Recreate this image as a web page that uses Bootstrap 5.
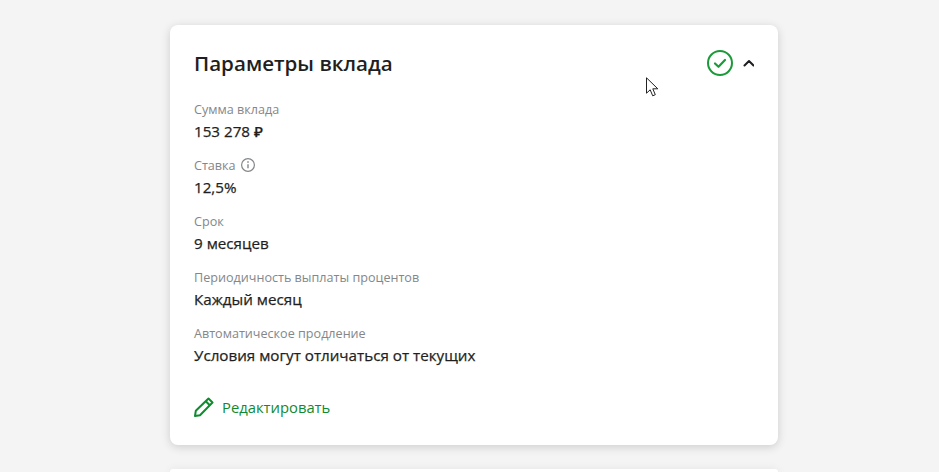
<!DOCTYPE html>
<html lang="ru">
<head>
  <meta charset="UTF-8">
  <title>Параметры вклада</title>
  <link href="https://cdn.jsdelivr.net/npm/bootstrap@5.3.0/dist/css/bootstrap.min.css" rel="stylesheet">
  <style>
    html, body { height: 472px; overflow: hidden; }
    body { background: #f4f4f4; font-family: "Open Sans", "Noto Sans", sans-serif; color: #1f1f22; position: relative; }
    .page { width: 608px; margin: 25px 0 0 170px; }
    .deposit-card { border: 0; border-radius: 8px; box-shadow: 0 2px 10px rgba(0,0,0,.16); padding: 24px; height: 420px; margin-bottom: 24px; }
    .deposit-title { font-size: 20.6px; line-height: 28px; font-weight: 600; margin: 0; }
    .card-head { height: 28px; margin-bottom: 22px; }
    .param { margin-bottom: 12px; }
    .param-label { font-size: 12.6px; line-height: 20px; color: #84878a; height: 20px; padding-top: 1px; }
    .param-value { font-size: 15.2px; line-height: 24px; font-weight: 500; height: 24px; -webkit-text-stroke: .25px #1f1f22; }
    .edit-link { color: #108a2f; font-size: 14.8px; line-height: 24px; text-decoration: none; margin-top: 16px; }
    .next-card { height: 3px; border-radius: 8px 8px 0 0; background: #fff; box-shadow: 0 2px 10px rgba(0,0,0,.16); }
    .cursor { position: absolute; left: 646px; top: 77px; }
  </style>
</head>
<body>
  <div class="page">
    <div class="card deposit-card">
      <div class="card-head d-flex align-items-center justify-content-between">
        <h2 class="deposit-title">Параметры вклада</h2>
        <div class="d-flex align-items-center gap-2 head-icons">
          <svg width="26" height="26" viewBox="0 0 26 26" fill="none" stroke="#1a9a38">
            <circle cx="13" cy="13" r="12" stroke-width="2"/>
            <path d="M8 13.500l3.500 3.300L18 10" stroke-width="2.200" stroke-linecap="round" stroke-linejoin="round"/>
          </svg>
          <svg width="13" height="26" viewBox="0 0 13 26" fill="none" stroke="#1f1f22">
            <path d="M3.500 15.500L8 11l4.500 4.500" stroke-width="2" stroke-linecap="round" stroke-linejoin="round"/>
          </svg>
        </div>
      </div>

      <div class="param">
        <div class="param-label">Сумма вклада</div>
        <div class="param-value">153 278 ₽</div>
      </div>
      <div class="param">
        <div class="param-label d-flex align-items-center gap-1">Ставка
          <svg width="16" height="16" viewBox="0 0 16 16" fill="none" stroke="#84878a">
            <circle cx="8" cy="7" r="6.400" stroke-width="1.200"/>
            <path d="M8 6.200v4" stroke-width="1.400"/>
            <circle cx="8" cy="4" r=".6" fill="#84878a" stroke-width=".6"/>
          </svg>
        </div>
        <div class="param-value">12,5%</div>
      </div>
      <div class="param">
        <div class="param-label">Срок</div>
        <div class="param-value">9 месяцев</div>
      </div>
      <div class="param">
        <div class="param-label">Периодичность выплаты процентов</div>
        <div class="param-value">Каждый месяц</div>
      </div>
      <div class="param">
        <div class="param-label">Автоматическое продление</div>
        <div class="param-value">Условия могут отличаться от текущих</div>
      </div>

      <a href="#" class="edit-link d-flex align-items-center gap-2">
        <svg width="20" height="20" viewBox="0 0 20 20" fill="none" stroke="#108a2f" stroke-width="2" stroke-linejoin="round">
          <path d="M1 19l.8-5.200L14.500 1.500l4 4L6 18.200z"/>
          <path d="M11.800 4.200l4 4"/>
        </svg>
        Редактировать
      </a>
    </div>
    <div class="next-card"></div>
  </div>
  <svg class="cursor" width="13" height="20" viewBox="0 0 13 20">
    <path d="M.5.800v15.400l3.700-3.400 2.500 6 2.600-1.100-2.500-5.900h5z" fill="#fff" stroke="#222" stroke-width="1"/>
  </svg>
</body>
</html>
